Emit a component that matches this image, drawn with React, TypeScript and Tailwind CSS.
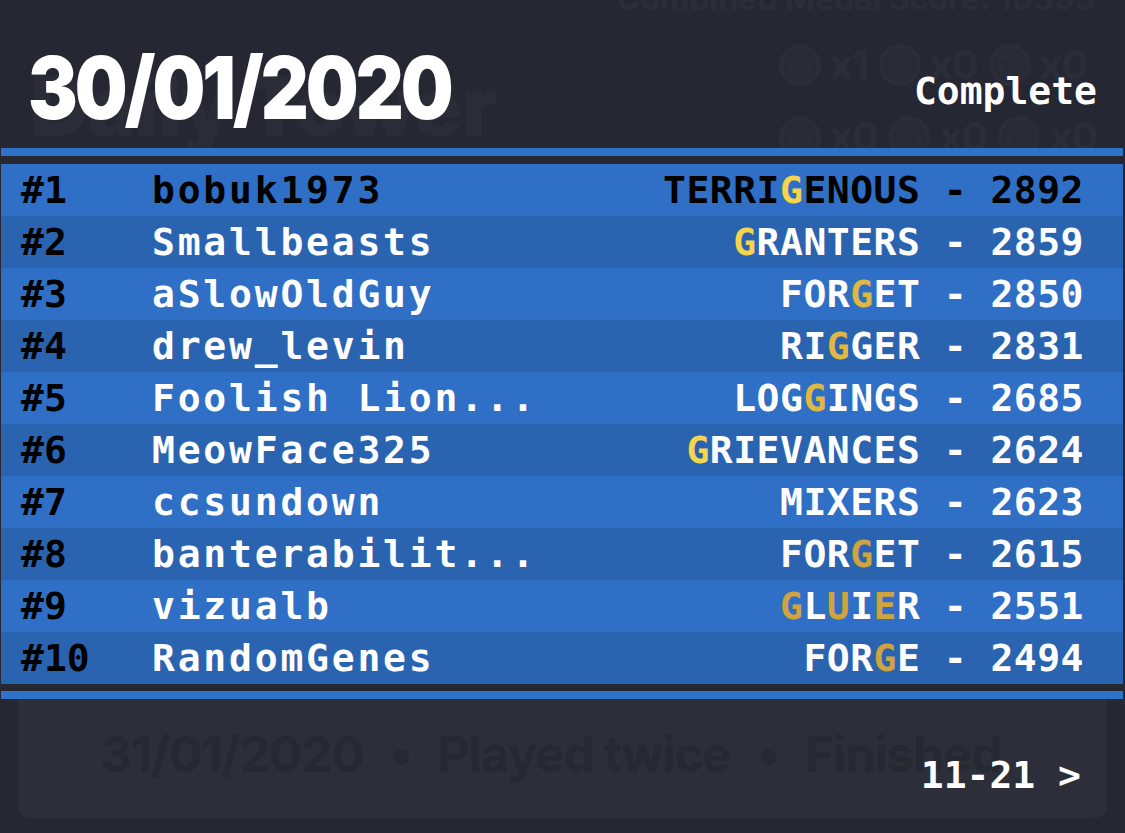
import React from "react";

type Row = {
  rank: string;
  name: string;
  word: string;
  hl: number[];
  score: number;
  tone: "bright" | "mid" | "dark";
};

const rows: Row[] = [
  { rank: "#1", name: "bobuk1973", word: "TERRIGENOUS", hl: [5], score: 2892, tone: "bright" },
  { rank: "#2", name: "Smallbeasts", word: "GRANTERS", hl: [0], score: 2859, tone: "bright" },
  { rank: "#3", name: "aSlowOldGuy", word: "FORGET", hl: [3], score: 2850, tone: "mid" },
  { rank: "#4", name: "drew_levin", word: "RIGGER", hl: [2], score: 2831, tone: "mid" },
  { rank: "#5", name: "Foolish Lion...", word: "LOGGINGS", hl: [3], score: 2685, tone: "mid" },
  { rank: "#6", name: "MeowFace325", word: "GRIEVANCES", hl: [0], score: 2624, tone: "bright" },
  { rank: "#7", name: "ccsundown", word: "MIXERS", hl: [], score: 2623, tone: "dark" },
  { rank: "#8", name: "banterabilit...", word: "FORGET", hl: [3], score: 2615, tone: "dark" },
  { rank: "#9", name: "vizualb", word: "GLUIER", hl: [0, 2, 4], score: 2551, tone: "dark" },
  { rank: "#10", name: "RandomGenes", word: "FORGE", hl: [3], score: 2494, tone: "dark" },
];

function Medal() {
  return (
    <svg width="44" height="44" viewBox="0 0 44 44">
      <circle cx="22" cy="22" r="21" fill="#2b2e39" />
      <circle cx="22" cy="22" r="15" fill="#2a2d38" stroke="#282b36" strokeWidth="3" />
      <polygon
        points="22,10 25,18.5 34,18.5 27,24 29.5,33 22,28 14.5,33 17,24 10,18.5 19,18.5"
        fill="#282b36"
      />
    </svg>
  );
}

function MedalItem({ label }: { label: string }) {
  return (
    <div className="flex items-center gap-[8px]">
      <Medal />
      <span className="font-['Inter',sans-serif] text-[40px] font-bold leading-none tracking-[-0.03em] text-[#2b2e39]">
        {label}
      </span>
    </div>
  );
}

function goldClass(tone: Row["tone"]) {
  if (tone === "bright") return "text-[#f6d44c]";
  if (tone === "mid") return "text-[#dfb843]";
  return "text-[#cfa33f]";
}

export default function App() {
  return (
    <div className="relative h-[833px] w-[1125px] overflow-hidden bg-[#252833] font-['DejaVu_Sans_Mono',monospace]">
      {/* ghost page underneath the overlay */}
      <div className="pointer-events-none absolute inset-0">
        <div className="absolute right-[30px] top-[-17px] whitespace-nowrap font-['Inter',sans-serif] text-[32px] font-bold leading-none text-[#2b2e39]">
          Combined Medal Score: 10395
        </div>
        <div className="absolute left-0 right-0 top-[22px] h-[1px] bg-[#292c37]" />
        <div className="absolute left-[30px] top-[66px] whitespace-nowrap font-['Inter',sans-serif] text-[82px] font-black leading-none tracking-[-0.02em] text-[#2a2d38]">
          Daily Tower
        </div>
        <div className="absolute right-[28px] top-[43px] flex flex-col gap-[28px]">
          <div className="flex gap-[10px]">
            <MedalItem label="x1" />
            <MedalItem label="x0" />
            <MedalItem label="x0" />
          </div>
          <div className="flex gap-[10px]">
            <MedalItem label="x0" />
            <MedalItem label="x0" />
            <MedalItem label="x0" />
          </div>
        </div>
      </div>

      {/* overlay content */}
      <div className="relative flex flex-col">
        <div className="flex h-[148px] items-start justify-between px-[28px]">
          <div className="origin-left scale-x-[0.865] whitespace-nowrap pt-[45px] font-['Inter',sans-serif] text-[86px] font-black leading-none tracking-[-0.04em] text-white">
            30/01/2020
          </div>
          <div className="pt-[72px] text-[38px] font-bold leading-none text-white">
            Complete
          </div>
        </div>

        <div className="ml-[1px] mr-[2px] flex flex-col">
          <div className="h-[8px] bg-[#2f72c9]" />
          <div className="h-[8px] bg-[#252833]" />
          {rows.map((r, idx) => {
            const dark = idx === 0;
            const base = dark ? "text-black" : "text-white";
            return (
              <div
                key={r.rank}
                className={`flex h-[52px] items-center pl-[20px] pr-[39px] text-[38px] font-bold leading-none ${
                  idx % 2 === 0 ? "bg-[#2f6fc5]" : "bg-[#2a64b0]"
                }`}
              >
                <div className="w-[131px] shrink-0 text-black">{r.rank}</div>
                <div className={`flex-1 whitespace-pre tracking-[2.8px] ${base}`}>{r.name}</div>
                <div className={`whitespace-pre tracking-[0.5px] ${base}`}>
                  {r.word.split("").map((c, i) =>
                    r.hl.includes(i) ? (
                      <span key={i} className={goldClass(r.tone)}>
                        {c}
                      </span>
                    ) : (
                      <span key={i}>{c}</span>
                    )
                  )}
                  {` - ${r.score}`}
                </div>
              </div>
            );
          })}
          <div className="h-[7px] bg-[#252833]" />
          <div className="h-[8px] bg-[#2f72c9]" />
        </div>

        <div className="relative h-[135px]">
          <div className="mx-[18px] flex h-[119px] items-center gap-[26px] overflow-hidden rounded-b-[12px] bg-[#2c2f3a] pb-[9px] pl-[82px] font-['Inter',sans-serif] text-[50px] font-bold leading-none tracking-[-0.03em] text-[#262832]">
            <span className="whitespace-nowrap">31/01/2020</span>
            <span>•</span>
            <span className="whitespace-nowrap">Played twice</span>
            <span>•</span>
            <span className="whitespace-nowrap">Finished</span>
          </div>
          <div className="absolute right-[44px] top-[57px] whitespace-pre text-[38px] font-bold leading-none text-white">
            11-21 &gt;
          </div>
        </div>
      </div>
    </div>
  );
}
